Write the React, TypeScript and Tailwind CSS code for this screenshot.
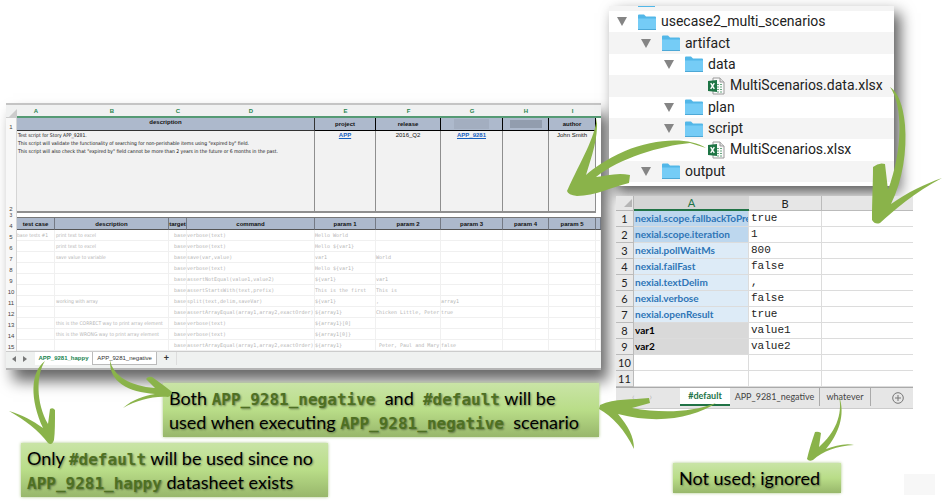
import type { ReactNode } from "react";

const condensed = "font-['DejaVu_Sans_Condensed','DejaVu_Sans',sans-serif] text-[5px]";
const mono = "font-['DejaVu_Sans_Mono',monospace] text-[5px]";

const scriptRows = [
  ["5", "base tests #1", "print text to excel", "verbose(text)", "Hello World", "", ""],
  ["6", "", "print text to excel", "verbose(text)", "Hello ${var1}", "", ""],
  ["7", "", "save value to variable", "save(var,value)", "var1", "World", ""],
  ["8", "", "", "verbose(text)", "Hello ${var1}", "", ""],
  ["9", "", "", "assertNotEqual(value1,value2)", "${var1}", "var1", ""],
  ["10", "", "", "assertStartsWith(text,prefix)", "This is the first", "This is", ""],
  ["11", "", "working with array", "split(text,delim,saveVar)", "${var1}", ",", "array1"],
  ["12", "", "", "assertArrayEqual(array1,array2,exactOrder)", "${array1}", "Chicken Little, Peter", "true"],
  ["13", "", "this is the CORRECT way to print array element", "verbose(text)", "${array1}[0]", "", ""],
  ["14", "", "this is the WRONG way to print array element", "verbose(text)", "${array1[0]}", "", ""],
  ["15", "", "", "assertArrayEqual(array1,array2,exactOrder)", "${array1}", " Peter, Paul and Mary", "false"],
];

const head = "border-r border-[#747a85] bg-[#adb9cc] p-0 text-center font-bold";
const info = "border-r border-b-2 border-[#8f8f8f] bg-[#f2f2f2] p-0 text-center align-top";
const num = "border-r border-[#d5d5d5] bg-[#f8f8f8] p-0 text-center align-bottom text-[#444]";
const cell = "border-r border-b border-[#f0f0f0] p-0 whitespace-pre";

function ScriptSheet() {
  return (
    <section className="border-t-2 border-[#c4c4c4] bg-white font-['Liberation_Sans',sans-serif] shadow-[7px_11px_14px_rgba(0,0,0,0.6)]">
      <table className="w-full table-fixed border-separate border-spacing-0 text-[6px] leading-[8px] text-[#111]">
        <colgroup>
          <col className="w-[11px]" />
          <col className="w-[38px]" />
          <col className="w-[114px]" />
          <col className="w-[18px]" />
          <col className="w-[128px]" />
          <col className="w-[61px]" />
          <col className="w-[65px]" />
          <col className="w-[62px]" />
          <col className="w-[46px]" />
          <col className="w-[47px]" />
          <col />
        </colgroup>
        <thead>
          <tr className="h-[13px] bg-[#f0f1f1] text-[#27854f]">
            <th className="border-b border-[#ccc] p-0 align-bottom">
              <svg viewBox="0 0 8 8" className="ml-auto size-2 fill-[#ccc]"><path d="M8 0V8H0Z" /></svg>
            </th>
            {["A", "B", "C", "D", "E", "F", "G", "H", "I"].map((c) => (
              <th key={c} className="border-b-2 border-[#559a74] p-0">{c}</th>
            ))}
            <th className="border-b-2 border-[#559a74] p-0" />
          </tr>
        </thead>
        <tbody>
          <tr className="h-[13px]">
            <td className={num}>1</td>
            <th colSpan={4} className="border-r border-b border-[#333] bg-[#adb9cc] p-0 align-top">description</th>
            <th className="border-r border-b border-black bg-[#adb9cc] p-0">project</th>
            <th className="border-r border-b border-black bg-[#adb9cc] p-0">release</th>
            <th className="border-r border-b border-black bg-[#adb9cc] p-0"><div className="mx-auto h-[10px] w-[35px] bg-[#a3aec0]" /></th>
            <th className="border-r border-b border-black bg-[#adb9cc] p-0"><div className="mx-auto h-2 w-8 bg-[#929dae]" /></th>
            <th className="border-r border-b border-black bg-[#adb9cc] p-0">author</th>
            <td />
          </tr>
          <tr className="h-[82px]">
            <td className={num}>2</td>
            <td colSpan={4} className={`border-r border-b-2 border-[#8f8f8f] bg-[#f2f2f2] p-0 pl-px align-top whitespace-nowrap ${condensed}`}>
              Test script for Story APP_9281.<br />
              This script will validate the functionality of searching for non-perishable items using "expired by" field.<br />
              This script will also check that "expired by" field cannot be more than 2 years in the future or 6 months in the past.
            </td>
            <td className={info}><a href="#app" className="font-bold text-[#1560c0] underline">APP</a></td>
            <td className={info}>2016_Q2</td>
            <td className={info}><a href="#story" className="font-bold text-[#1560c0] underline">APP_9281</a></td>
            <td className={info} />
            <td className={info}>John Smith</td>
            <td />
          </tr>
          <tr className="h-[5px] text-[5px] leading-[5px]">
            <td className={num}>3</td>
            <td colSpan={10} className="border-b border-[#777] p-0" />
          </tr>
          <tr className="h-[12px] [&>th]:border-b [&>th]:border-b-[#555]">
            <td className={num}>4</td>
            <th className={head}>test case</th>
            <th className={head}>description</th>
            <th className={head}>target</th>
            <th className={head}>command</th>
            <th className={head}>param 1</th>
            <th className={head}>param 2</th>
            <th className={head}>param 3</th>
            <th className={head}>param 4</th>
            <th className={head}>param 5</th>
            <th className={head} />
          </tr>
          {scriptRows.map(([n, test, desc, cmd, p1, p2, p3]) => (
            <tr key={n} className="h-[11px] text-[#b5b5b5]">
              <td className={num}>{n}</td>
              <td className={`${cell} ${condensed}`}>{test}</td>
              <td className={`${cell} ${condensed} pl-px`}>{desc}</td>
              <td className={`${cell} ${mono} text-right`}>base</td>
              <td className={`${cell} ${mono}`}>{cmd}</td>
              <td className={`${cell} ${mono}`}>{p1}</td>
              <td className={`${cell} ${mono}`}>{p2}</td>
              <td className={`${cell} ${mono}`}>{p3}</td>
              <td className={cell} />
              <td className={cell} />
              <td className={cell} />
            </tr>
          ))}
        </tbody>
      </table>
      <nav className="flex h-[19px] items-start border-t border-b-2 border-t-[#ccc] border-b-[#b5b5b5] bg-[#eff1f0] text-[6px] text-[#333]">
        <button aria-label="Previous sheet" className="mt-1 ml-[6px]"><svg viewBox="0 0 4 6" className="h-[6px] w-1 fill-[#777]"><path d="M4 0V6L0 3Z" /></svg></button>
        <button aria-label="Next sheet" className="mt-1 ml-[7px]"><svg viewBox="0 0 4 6" className="h-[6px] w-1 fill-[#777]"><path d="M0 0V6L4 3Z" /></svg></button>
        <button className="ml-2 h-[13px] w-[58px] border-r border-[#bbb] bg-white font-bold text-[#208550]">APP_9281_happy</button>
        <button className="h-[13px] w-16 border-r border-b border-[#bbb] bg-white">APP_9281_negative</button>
        <button className="h-[13px] w-5 border-r border-[#ddd] text-[9px] font-bold">+</button>
      </nav>
    </section>
  );
}

function Folder() {
  return (
    <svg viewBox="0 0 18 16" className="h-4 w-[18px]">
      <path d="M0 1.5Q0 .5 1 .5H6L8 2.5H17Q18 2.5 18 3.5V15.5H0Z" fill="#52b7e8" />
      <path d="M0 4.5H18V15Q18 15.5 17.5 15.5H.5Q0 15.5 0 15Z" fill="#75ccf6" />
      <path d="M0 15.5H18" stroke="#4da8d6" />
    </svg>
  );
}

function ExcelFile() {
  return (
    <svg viewBox="0 0 17 18" className="h-[18px] w-[17px]">
      <path d="M5 1H12L16 5V17H5Z" fill="#fafafa" stroke="#9a9a9a" />
      <path d="M12 1V5H16" fill="#ddd" stroke="#9a9a9a" />
      <path d="M9 7.5H14M9 10H14M9 12.5H14M9 15H14" stroke="#67a780" strokeDasharray="2 1" />
      <path d="M0 4L9 3V15L0 14Z" fill="#1d7444" />
      <path d="M2.7 6.2L6.3 11.8M6.3 6.2L2.7 11.8" stroke="#fff" strokeWidth="1.4" />
    </svg>
  );
}

const tree = [
  { name: "usecase2_multi_scenarios", indent: "pl-[8px]", file: false },
  { name: "artifact", indent: "pl-[32px]", file: false },
  { name: "data", indent: "pl-[55px]", file: false },
  { name: "MultiScenarios.data.xlsx", indent: "pl-[99px]", file: true },
  { name: "plan", indent: "pl-[55px]", file: false },
  { name: "script", indent: "pl-[55px]", file: false },
  { name: "MultiScenarios.xlsx", indent: "pl-[99px]", file: true },
  { name: "output", indent: "pl-[32px]", file: false },
];

function FileTree() {
  return (
    <section className="w-[285px] bg-white pb-1 font-['Roboto',sans-serif] text-[14px] text-[#222] shadow-[6px_7px_14px_rgba(0,0,0,0.65)]">
      <div className="flex h-[5px] items-start bg-[#f4f4f4] pl-[29px]"><span className="h-px w-[17px] bg-[#52b7e8]" /></div>
      <ul className="grid h-[171px] grid-rows-8">
        {tree.map((t) => (
          <li key={t.name} className={`flex items-center even:bg-[#f4f4f4] ${t.indent}`}>
            {t.file ? <ExcelFile /> : (
              <>
                <button aria-label={`Toggle ${t.name}`} className="mr-[11px]">
                  <svg viewBox="0 0 10 9" className="h-[9px] w-[10px] fill-[#858585]"><path d="M0 0H10L5 9Z" /></svg>
                </button>
                <Folder />
              </>
            )}
            <span className="ml-[5px]">{t.name}</span>
          </li>
        ))}
      </ul>
    </section>
  );
}

const data = [
  ["nexial.scope.fallbackToPre", "true"],
  ["nexial.scope.iteration", "1"],
  ["nexial.pollWaitMs", "800"],
  ["nexial.failFast", "false"],
  ["nexial.textDelim", ","],
  ["nexial.verbose", "false"],
  ["nexial.openResult", "true"],
  ["var1", "value1"],
  ["var2", "value2"],
  ["", ""],
  ["", ""],
];

function nameStyle(i: number) {
  if (i < 2) return "bg-[#bdd7ee] text-[#2e75b6]";
  if (i < 7) return "bg-[#ddebf7] text-[#2e75b6]";
  if (i < 9) return "bg-[#d9d9d9] text-black";
  return "bg-white";
}

function DataSheet() {
  return (
    <section className="relative w-[297px] bg-white font-['Lato',sans-serif]">
      <table className="w-full table-fixed border-separate border-spacing-0 text-[11px] leading-[15px] text-[#222]">
        <colgroup><col className="w-[18px]" /><col className="w-[115px]" /><col className="w-[73px]" /><col /></colgroup>
        <thead>
          <tr className="h-[15px] bg-[#e6e6e6] leading-[13px]">
            <th className="border-r border-b border-[#b5b5b5] p-0"><svg viewBox="0 0 8 8" className="mx-auto ml-2 size-2 fill-[#b5b5b5]"><path d="M8 0V8H0Z" /></svg></th>
            <th className="border-b-2 border-[#217346] bg-[#d5d5d5] p-0 font-normal text-[#217346]">A</th>
            <th className="border-r border-b border-[#bbb] p-0 font-normal">B</th>
            <th className="border-b border-[#bbb] p-0" />
          </tr>
        </thead>
        <tbody>
          {data.map(([k, v], i) => (
            <tr key={i} className="h-4">
              <td className="border-r border-b border-[#bbb] bg-[#e9e9e9] p-0 text-center">{i + 1}</td>
              <td className={`overflow-hidden border-r border-b border-[#dcdcdc] p-0 pl-px text-[10px] font-bold whitespace-nowrap ${nameStyle(i)}`}>{k}</td>
              <td className="border-r border-b border-[#dcdcdc] p-0 pl-[2px] font-['Liberation_Mono',monospace]">{v}</td>
              <td className="border-b border-[#dcdcdc] p-0" />
            </tr>
          ))}
        </tbody>
      </table>
      <nav className="flex h-[22px] items-start border-t border-b border-t-[#aaa] border-b-[#ccc] bg-[#e6e6e6] text-[9px] text-[#444]">
        <div className="flex w-16 gap-[15px] pt-[2px] pl-4 text-[#bbb]"><button aria-label="Previous sheet">‹</button><button aria-label="Next sheet">›</button></div>
        <button className="h-[18px] w-[50px] border-b-2 border-[#217346] bg-white font-bold text-[#217346]">#default</button>
        <button className="h-[18px] w-[90px] border-r border-[#aaa]">APP_9281_negative</button>
        <button className="h-[18px] w-[51px] border-r border-[#aaa]">whatever</button>
        <button aria-label="Add sheet" className="mt-[4px] ml-[21px]">
          <svg viewBox="0 0 12 12" className="size-3 fill-none stroke-[#777]"><circle cx="6" cy="6" r="5.3" /><path d="M3 6H9M6 3V9" /></svg>
        </button>
      </nav>
    </section>
  );
}

function Callout({ className, children }: { className: string; children: ReactNode }) {
  return (
    <p className={`bg-linear-to-b from-[#c9e4a6] via-[#b9dd88] to-[#98b76b] font-['Lato',sans-serif] text-[18px] leading-6 whitespace-nowrap text-black shadow-[0_0_3px_#a9c684] text-shadow-[1px_1px_2px_rgba(0,0,0,0.4)] ${className}`}>
      {children}
    </p>
  );
}

function Code({ children }: { children: ReactNode }) {
  return <code className="font-['DejaVu_Sans_Mono',monospace] text-[16px] leading-none font-bold text-[#4e7023]">{children}</code>;
}

function Arrows() {
  return (
    <svg aria-hidden="true" viewBox="0 0 942 503" className="pointer-events-none absolute top-0 left-0 h-[503px] w-[942px] fill-[#8ab34a]">
      <path d="M597 118C594 140 582 158 567 191Q568 195 577 196C595 196 612 187 629 183L630 175C617 172 606 176 596 177C620 158 660 146 690 143L706 148C690 137 655 138 625 151C605 160 594 168 586 175C592 155 598 140 597 118Z" />
      <path d="M890 87C903 105 903 150 888 190L885 164Q879 162 873 167C873 185 872 200 872 220Q875 225 880 223C893 211 915 192 942 178C925 184 908 192 891 204C903 180 907 150 905 125C903 105 898 92 890 87Z" />
      <path d="M716 403C690 413 660 413 632 408L650 403L649 398C632 400 615 398 600 405L599 409C612 416 625 430 634 449C634 436 628 426 618 414C660 425 695 417 716 403Z" />
      <path d="M839 396C843 415 835 433 819 447L821 433Q818 431 815 432C812 441 809 450 807 459Q809 462 813 460C823 451 837 446 854 445C845 443 835 446 826 449C838 435 846 415 839 396Z" />
      <path d="M45 361C36 375 36 403 48 424L50 409Q53 407 55 410C55 422 55 432 54 440Q52 446 48 443C38 430 25 420 9 411C22 415 32 420 43 428C30 400 30 372 45 361Z" />
      <path d="M110 360C113 376 130 386 155 388L146 379Q148 376 152 377C159 382 166 387 172 392Q172 396 168 397C152 396 138 400 123 408C133 399 144 396 155 394C128 392 109 382 110 360Z" />
    </svg>
  );
}

export default function App() {
  return (
    <main className="relative flex min-h-screen gap-2 overflow-hidden bg-white pl-[6px]">
      <div className="w-[595px] shrink-0 pt-[103px]">
        <ScriptSheet />
        <Callout className="relative mt-[13px] ml-[157px] w-[436px] py-[3px] pl-[6px]">
          Both <Code>APP_9281_negative</Code>&nbsp; and &nbsp;<Code>#default</Code> will be<br />
          used when executing <Code>APP_9281_negative</Code>&nbsp; scenario
        </Callout>
        <Callout className="mt-[6px] ml-[15px] w-[307px] py-[3px] pl-[6px]">
          Only <Code>#default</Code> will be used since no<br />
          <Code>APP_9281_happy</Code> datasheet exists
        </Callout>
      </div>
      <div className="relative grow pt-[6px]">
        <FileTree />
        <div className="mt-[10px] ml-[7px]"><DataSheet /></div>
        <div className="mt-[54px] flex items-start pr-[7px] pl-16">
          <Callout className="w-[168px] py-[3px] pl-[6px]">Not used; ignored</Callout>
          <span className="mt-[11px] ml-auto h-[21px] w-[31px] bg-[#f7f7f7]" />
        </div>
      </div>
      <Arrows />
    </main>
  );
}
